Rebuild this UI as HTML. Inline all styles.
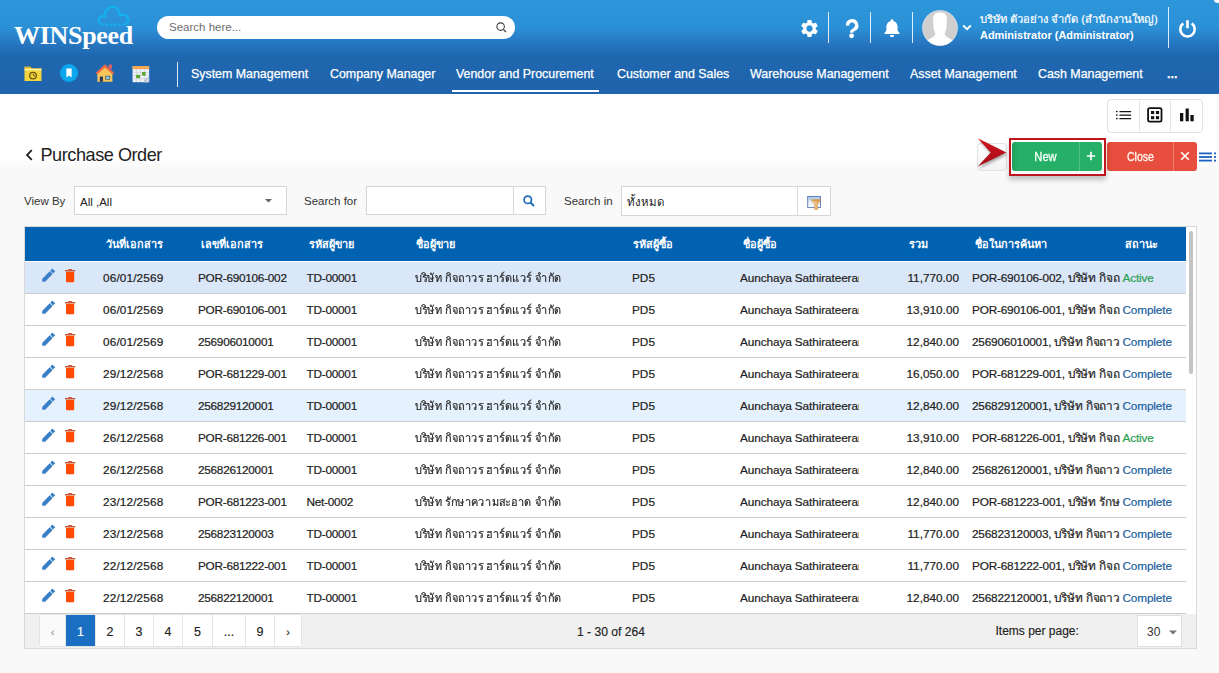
<!DOCTYPE html>
<html><head><meta charset="utf-8">
<style>
*{margin:0;padding:0;box-sizing:border-box}
html,body{width:1219px;height:673px;overflow:hidden}
body{font-family:"Liberation Sans",sans-serif;background:#f9f9f9;position:relative;color:#222}
.abs{position:absolute}
#hdr{position:absolute;left:0;top:0;width:1219px;height:94px;background:linear-gradient(to bottom,#2d96da 0px,#2b91d7 27px,#2676c0 44px,#1f67af 55px,#1f64ac 94px)}
#logo{position:absolute;left:14px;top:21px;font-family:"Liberation Serif",serif;font-weight:bold;font-size:26px;color:#fff;letter-spacing:-0.3px;line-height:30px;white-space:nowrap}
#search{position:absolute;left:157px;top:16px;width:358px;height:23px;background:#fff;border-radius:12px}
#search span{position:absolute;left:12px;top:4px;font-size:11.5px;color:#6d6d6d;line-height:14px}
.sep{position:absolute;width:1px;background:rgba(255,255,255,0.85)}
#uname{position:absolute;left:980px;top:11px;color:#fff;font-size:11.2px;-webkit-text-stroke:0.2px #fff;line-height:16px;white-space:nowrap}
#uname b{font-weight:bold;display:block;font-size:10.95px;margin-top:-0.5px;-webkit-text-stroke:0}
.nav{position:absolute;top:67px;color:#fff;font-size:12.4px;line-height:14px;white-space:nowrap;-webkit-text-stroke:0.25px #fff}
#page{position:absolute;left:0;top:94px;width:1219px;height:579px;background:linear-gradient(to bottom,#fefefe 0px,#fefefe 34px,#ffffff 35px,#ffffff 63px,#f9f9f9 74px,#f9f9f9 579px)}
#title{position:absolute;left:40.5px;top:144.5px;font-size:18.1px;letter-spacing:-0.45px;color:#222;line-height:20px}
.lbl{position:absolute;font-size:11.5px;color:#333;line-height:14px;white-space:nowrap}
.inp{position:absolute;background:#fff;border:1px solid #d6d6d6}
#tbl{position:absolute;left:24px;top:226px;width:1173px;height:423px;border:1px solid #d9d9d9;background:#fff;overflow:hidden}
#thead{position:absolute;left:0;top:0;width:1161px;height:34px;background:#0262b2}
.hd{position:absolute;top:10px;color:#fff;font-weight:bold;font-size:10.9px;line-height:14px;white-space:nowrap}
.row{position:absolute;left:0;width:1161px;height:32px;border-bottom:1px solid #cccccc;background:#fff}
.row.sel{background:#dae7f8}
.row.hov{background:#e5f1fc}
.row .t{position:absolute;top:9px;font-size:11.8px;line-height:14px;color:#222;white-space:nowrap;-webkit-text-stroke:0.2px currentColor}
.row .c{position:absolute}
.row .ic{display:block}
.clip{overflow:hidden}
.row .th{transform:scaleX(0.93);transform-origin:0 0;-webkit-text-stroke:0.15px #222}
.rt{text-align:right}
.act{color:#2aa051}
.cmp{color:#22609e}
#pager{position:absolute;left:0;top:387px;width:1171px;height:34px;background:#f0f0f0}
.pg{position:absolute;top:1px;height:31px;background:#fff;border-right:1px solid #e6e6e6;font-size:12.5px;color:#222;text-align:center;line-height:35px;-webkit-text-stroke:0.15px currentColor}
.pg.on{background:#1a6fc3;color:#fff}
#scroll{position:absolute;left:1164px;top:4px;width:4px;height:143px;background:#c4c4c4;border-radius:2px}
</style></head><body>
<div id="hdr">
  <div class="abs" style="left:1214px;top:-3px;width:8px;height:6px;border-radius:50%;background:#fff;filter:blur(0.6px)"></div>
  <svg class="abs" style="left:0;top:0" width="140" height="30" viewBox="0 0 140 30">
    <path d="M103 24.6 A4.3 4.3 0 1 1 105.75 16.99 A7.3 7.3 0 1 1 119.46 16.41 A5 5 0 1 1 123.3 24.6" fill="none" stroke="#12b2ee" stroke-width="2.1"/>
    <path d="M105.5 24.6 H121.5" stroke="#12b2ee" stroke-width="2.1" stroke-dasharray="2.6 1.6"/>
  </svg>
  <div id="logo">WINSpeed</div>
  <div id="search"><span>Search here...</span>
    <svg class="abs" style="left:338px;top:5px" width="13" height="13" viewBox="0 0 13 13"><circle cx="5.6" cy="5.6" r="3.75" fill="none" stroke="#3a3a3a" stroke-width="1.05"/><path d="M8.3 8.3 L11 11" stroke="#3a3a3a" stroke-width="1.2"/></svg>
  </div>
  <!-- gear -->
  <svg class="abs" style="left:798.5px;top:18px" width="21" height="21" viewBox="0 0 24 24"><path fill="#fff" d="M19.14 12.94c.04-.3.06-.61.06-.94 0-.32-.02-.64-.07-.94l2.03-1.58a.49.49 0 0 0 .12-.61l-1.92-3.32a.488.488 0 0 0-.59-.22l-2.39.96c-.5-.38-1.03-.7-1.62-.94l-.36-2.54a.484.484 0 0 0-.48-.41h-3.84c-.24 0-.43.17-.47.41l-.36 2.54c-.59.24-1.13.57-1.62.94l-2.39-.96c-.22-.08-.47 0-.59.22L2.74 8.87c-.12.21-.08.47.12.61l2.03 1.58c-.05.3-.09.63-.09.94s.02.64.07.94l-2.03 1.58a.49.49 0 0 0-.12.61l1.92 3.32c.12.22.37.29.59.22l2.39-.96c.5.38 1.03.7 1.62.94l.36 2.54c.05.24.24.41.48.41h3.84c.24 0 .44-.17.47-.41l.36-2.54c.59-.24 1.13-.56 1.62-.94l2.39.96c.22.08.47 0 .59-.22l1.92-3.32c.12-.22.07-.47-.12-.61l-2.01-1.58zM12 15.6c-1.98 0-3.6-1.62-3.6-3.6s1.62-3.6 3.6-3.6 3.6 1.62 3.6 3.6-1.62 3.6-3.6 3.6z"/></svg>
  <div class="sep" style="left:828px;top:12px;height:31px"></div>
  <svg class="abs" style="left:840px;top:15.8px" width="25" height="25" viewBox="840 15 25 25"><path d="M847.5 24.6 A4.6 4.6 0 1 1 854.4 28.4 Q851.7 29.8 851.7 31.2 V31.8" fill="none" stroke="#fff" stroke-width="3.3"/><circle cx="851.6" cy="34.8" r="2.4" fill="#fff"/></svg>
  <div class="sep" style="left:870px;top:12px;height:31px"></div>
  <svg class="abs" style="left:883px;top:18px" width="18" height="20" viewBox="0 0 18 20"><path fill="#fff" d="M9 1.2c.8 0 1.3.6 1.3 1.2v.5c2.6.6 4.3 2.9 4.3 5.7v3.8l1.9 2.6v1H1.5v-1l1.9-2.6V8.6c0-2.8 1.7-5.1 4.3-5.7v-.5c0-.6.5-1.2 1.3-1.2z"/><path fill="#fff" d="M6.8 17h4.4a2.2 2.2 0 0 1-4.4 0z"/></svg>
  <div class="sep" style="left:912px;top:12px;height:31px"></div>
  <svg class="abs" style="left:922px;top:10px" width="36" height="36" viewBox="0 0 36 36"><defs><clipPath id="cc"><circle cx="18" cy="18" r="17.6"/></clipPath></defs><circle cx="18" cy="18" r="17.8" fill="#e3e8ee"/><circle cx="18" cy="18" r="17.2" fill="#cfcfcf"/><g clip-path="url(#cc)" fill="#fff"><path d="M18 2.6 C22.6 2.6 24.9 4.6 24.9 9 L24.7 16 C24.5 19 23.6 21.2 22.6 23.4 C22.9 25.6 24.6 27 27.6 28.4 C31 30 33 32.5 34 37 H2 C3 32.5 5 30 8.4 28.4 C11.4 27 13.1 25.6 13.4 23.4 C12.4 21.2 11.5 19 11.3 16 L11.1 9 C11.1 4.6 13.4 2.6 18 2.6 Z"/></g></svg>
  <svg class="abs" style="left:962px;top:24px" width="10" height="7" viewBox="0 0 10 7"><path d="M1.2 1.5 L5 5.2 L8.8 1.5" fill="none" stroke="#fff" stroke-width="1.8"/></svg>
  <div id="uname">บริษัท ตัวอย่าง จำกัด (สำนักงานใหญ่)<b>Administrator (Administrator)</b></div>
  <div class="sep" style="left:1168px;top:7px;height:41px"></div>
  <svg class="abs" style="left:1178px;top:18.5px" width="19" height="19" viewBox="0 0 19 19"><path d="M5.3 4.4 A7.2 7.2 0 1 0 13.7 4.4" fill="none" stroke="#fff" stroke-width="2.6"/><path d="M9.5 1.2 V9.2" stroke="#fff" stroke-width="2.6"/></svg>

  <!-- nav icons -->
  <svg class="abs" style="left:24px;top:65.5px" width="18" height="16" viewBox="0 0 18 16"><path d="M0.5 0.8 H6.5 L7.6 2.2 H17.5 V15 H0.5 Z" fill="#f3d43c"/><rect x="0.5" y="0.8" width="6" height="1.2" fill="#d9b52a"/><rect x="0.5" y="3" width="17" height="1.3" fill="#fdf0a8"/><circle cx="9" cy="9.6" r="3.3" fill="none" stroke="#6a5510" stroke-width="1.3"/><path d="M9 7.9 L10.5 10.5" fill="none" stroke="#6a5510" stroke-width="1.1"/></svg>
  <svg class="abs" style="left:60px;top:64px" width="18" height="18" viewBox="0 0 18 18"><circle cx="9" cy="9" r="9" fill="#0ba6ee"/><path d="M6.4 4.5 H11.6 V13.6 L9 11.4 L6.4 13.6 Z" fill="#fff"/></svg>
  <svg class="abs" style="left:90px;top:60px" width="64" height="26" viewBox="90 60 64 26">
<rect x="108.8" y="64.6" width="3.2" height="4" fill="#e0606a"/>
<path d="M97.4 72 L105 65.6 L112.4 72 V81.8 H97.4 Z" fill="#f7c65a"/>
<path d="M95.6 73 L105 64.3 L114.3 73 L112.6 74.4 L105 67.4 L97.3 74.4 Z" fill="#ec6a45"/>
<path d="M99.8 81.8 V77 Q101.4 75.4 103 77 V81.8 Z" fill="#2c3d52"/>
<rect x="105.2" y="75.8" width="5" height="3.8" fill="#3d4f66"/><rect x="105.9" y="76.5" width="3.6" height="2.4" fill="#8fcaf0"/>
<rect x="132.6" y="66" width="16.5" height="16.2" fill="#eef3f8"/>
<rect x="132.6" y="66" width="16.5" height="3.2" fill="#f4a650"/>
<path d="M132.6 72.3 H149.1 M132.6 75.5 H149.1 M132.6 78.8 H149.1 M136.4 69.2 V82.2 M140.5 69.2 V82.2 M144.6 69.2 V82.2" stroke="#c5cfd9" stroke-width="0.7"/>
<rect x="136.1" y="74.8" width="3.9" height="3.3" fill="#5da52c"/><rect x="142" y="72" width="3.7" height="3.5" fill="#5da52c"/>
<path d="M143 82.2 L149.1 76.5 V82.2 Z" fill="#cfd6dd"/><path d="M143.5 81.8 L148.8 77" stroke="#9aa5b0" stroke-width="0.7"/>
</svg>
<div class="sep" style="left:177px;top:62px;height:25px"></div>
  <div class="nav" style="left:191px">System Management</div>
  <div class="nav" style="left:330px">Company Manager</div>
  <div class="nav" style="left:456px">Vendor and Procurement</div>
  <div class="abs" style="left:452px;top:90px;width:147px;height:2px;background:#fff"></div>
  <div class="nav" style="left:617px">Customer and Sales</div>
  <div class="nav" style="left:750px">Warehouse Management</div>
  <div class="nav" style="left:910px">Asset Management</div>
  <div class="nav" style="left:1038px">Cash Management</div>
  <div class="nav" style="left:1167px;font-weight:bold">...</div>
</div>

<div id="page"></div>

<!-- view toggle -->
<div class="abs" style="left:1107px;top:99px;width:96px;height:34px;background:#fff;border:1px solid #e1e1e1;border-radius:4px"></div>
<div class="abs" style="left:1139px;top:100px;width:1px;height:32px;background:#e4e4e4"></div>
<div class="abs" style="left:1170px;top:100px;width:1px;height:32px;background:#e4e4e4"></div>
<svg class="abs" style="left:1105px;top:97px" width="100" height="38" viewBox="1105 97 100 38">
<g fill="#111">
<rect x="1116" y="110.9" width="1.6" height="1.3"/><rect x="1116" y="114.4" width="1.6" height="1.3"/><rect x="1116" y="117.9" width="1.6" height="1.3"/>
<rect x="1119.4" y="110.9" width="11.8" height="1.4" rx="0.5"/><rect x="1119.4" y="114.4" width="11.8" height="1.4" rx="0.5"/><rect x="1119.4" y="117.9" width="11.8" height="1.4" rx="0.5"/>
<rect x="1151" y="111" width="3.2" height="3.1"/><rect x="1155.9" y="111" width="3.2" height="3.1"/><rect x="1151" y="116.1" width="3.2" height="3.1"/><rect x="1155.9" y="116.1" width="3.2" height="3.1"/>
<rect x="1180" y="113" width="3.3" height="8.3"/><rect x="1185.6" y="108.5" width="3.2" height="12.8"/><rect x="1190.4" y="115" width="3.3" height="6.3"/>
</g>
<rect x="1148.1" y="108.2" width="13.4" height="13.4" rx="1.6" fill="none" stroke="#111" stroke-width="1.8"/>
</svg>

<!-- title -->
<svg class="abs" style="left:25px;top:149px" width="9" height="12" viewBox="0 0 9 12"><path d="M6.8 1.2 L2 6 L6.8 10.8" fill="none" stroke="#222" stroke-width="1.8"/></svg>
<div id="title">Purchase Order</div>

<!-- arrow pointer -->
<div class="abs" style="left:977px;top:142.5px;width:30px;height:28px;background:linear-gradient(#ffffff,#f3f3f3);border:1px solid #e2e2e2;border-radius:4px"></div>
<svg class="abs" style="left:970px;top:130px" width="45" height="45" viewBox="970 130 45 45"><defs><linearGradient id="ar" x1="0" y1="0" x2="0" y2="1"><stop offset="0" stop-color="#d0141f"/><stop offset="1" stop-color="#a50d17"/></linearGradient></defs><path d="M977.7 138.2 L1006.3 152.4 L977.7 166.6 L990.7 152.4 Z" fill="url(#ar)" style="filter:drop-shadow(1px 2px 1.5px rgba(0,0,0,0.35))"/></svg>
<!-- red outline -->
<div class="abs" style="left:1008.5px;top:137.5px;width:97px;height:38px;border:2px solid #c0161e;box-shadow:0 4px 5px rgba(0,0,0,0.22)"></div>
<div class="abs" style="left:1012px;top:142px;width:90px;height:29px;background:linear-gradient(to right,#1f9f5c,#26b067 6px,#26b067);border-radius:3px"></div>
<div class="abs" style="left:1079px;top:142px;width:1px;height:29px;background:#4cc384"></div>
<div class="abs" style="left:1012px;top:150px;width:67px;text-align:center;color:#f2fff6;font-size:12px;line-height:14px;-webkit-text-stroke:0.35px #f2fff6;transform:scaleX(0.93)">New</div>
<svg class="abs" style="left:1085px;top:150px" width="12" height="12" viewBox="0 0 12 12"><path d="M6 1.8 V10.2 M1.8 6 H10.2" stroke="#fff" stroke-width="1.7"/></svg>
<div class="abs" style="left:1107px;top:142px;width:90px;height:29px;background:linear-gradient(to right,#d94434,#e84e3e 6px,#e84e3e);border-radius:3px"></div>
<div class="abs" style="left:1173px;top:142px;width:1px;height:29px;background:#f08073"></div>
<div class="abs" style="left:1108px;top:150px;width:65px;text-align:center;color:#fff3ea;font-size:12.3px;line-height:14px;-webkit-text-stroke:0.35px #fff3ea;transform:scaleX(0.86)">Close</div>
<svg class="abs" style="left:1180px;top:151px" width="10" height="10" viewBox="0 0 10 10"><path d="M1.2 1.2 L8.8 8.8 M8.8 1.2 L1.2 8.8" stroke="#fff" stroke-width="1.6"/></svg>
<svg class="abs" style="left:1199px;top:152px" width="20" height="10" viewBox="0 0 20 10"><rect x="0" y="0.5" width="13" height="1.8" fill="#1b63bf"/><rect x="0" y="4.1" width="13" height="1.8" fill="#1b63bf"/><rect x="0" y="7.7" width="13" height="1.8" fill="#1b63bf"/><rect x="15" y="0.5" width="2" height="1.8" fill="#1b63bf"/><rect x="15" y="4.1" width="2" height="1.8" fill="#1b63bf"/><rect x="15" y="7.7" width="2" height="1.8" fill="#1b63bf"/></svg>

<!-- filters -->
<div class="lbl" style="left:24px;top:194px">View By</div>
<div class="inp" style="left:74px;top:186px;width:213px;height:29px"></div>
<div class="lbl" style="left:80px;top:195px;color:#222">All ,All</div>
<svg class="abs" style="left:265px;top:199px" width="7" height="4" viewBox="0 0 7 4"><path d="M0 0 H7 L3.5 3.5Z" fill="#666"/></svg>
<div class="lbl" style="left:304px;top:194px">Search for</div>
<div class="inp" style="left:366px;top:186px;width:180px;height:29px"></div>
<div class="abs" style="left:513px;top:187px;width:1px;height:27px;background:#dadada"></div>
<svg class="abs" style="left:523px;top:195px" width="12" height="12" viewBox="0 0 12 12"><circle cx="4.8" cy="4.8" r="3.7" fill="none" stroke="#1f68b5" stroke-width="1.7"/><path d="M7.6 7.6 L11 11" stroke="#1f68b5" stroke-width="2"/></svg>
<div class="lbl" style="left:564px;top:194px">Search in</div>
<div class="inp" style="left:621px;top:186px;width:210px;height:30px"></div>
<div class="abs" style="left:797px;top:187px;width:1px;height:28px;background:#dadada"></div>
<div class="lbl" style="left:627px;top:195px;color:#222">ทั้งหมด</div>
<svg class="abs" style="left:800px;top:190px" width="30" height="25" viewBox="800 190 30 25"><defs><linearGradient id="wg" x1="0" y1="0" x2="0" y2="1"><stop offset="0" stop-color="#9cc0ee"/><stop offset="0.5" stop-color="#e6f0fb"/><stop offset="1" stop-color="#ffffff"/></linearGradient><linearGradient id="fg" x1="0" y1="0" x2="1" y2="0"><stop offset="0" stop-color="#fbe1b0"/><stop offset="1" stop-color="#dd9a4c"/></linearGradient></defs><rect x="807.7" y="196.4" width="12.8" height="11.2" fill="url(#wg)" stroke="#5b78ad" stroke-width="0.9"/><path d="M810.6 199.6 H820.8 L817.6 204.2 V209.2 Q816.1 210.2 814.6 209.2 V204.2 Z" fill="url(#fg)" stroke="#c98a3f" stroke-width="0.5"/><ellipse cx="815.7" cy="200.4" rx="3.6" ry="0.9" fill="#c98a3f" opacity="0.6"/></svg>

<!-- table -->
<div id="tbl">
  <div id="thead">
    <span class="hd" style="left:81px">วันที่เอกสาร</span>
    <span class="hd" style="left:176px">เลขที่เอกสาร</span>
    <span class="hd" style="left:284px">รหัสผู้ขาย</span>
    <span class="hd" style="left:391px">ชื่อผู้ขาย</span>
    <span class="hd" style="left:608px">รหัสผู้ซื้อ</span>
    <span class="hd" style="left:718px">ชื่อผู้ซื้อ</span>
    <span class="hd" style="left:884px">รวม</span>
    <span class="hd" style="left:950px">ชื่อในการค้นหา</span>
    <span class="hd" style="left:1100px">สถานะ</span>
  </div>
<div class="row sel" style="top:35px">
<span class="c" style="left:17px;top:7px"><svg class="ic pen" width="14" height="14" viewBox="0 0 14 14" style="overflow:visible"><path d="M0.2 12.8 L0.31 9.83 L7.77 2.2 L10.63 5.0 L3.17 12.63 Z" fill="#3b7fc6"/><path d="M8.26 1.7 L10.36 -0.44 L13.2 2.36 L11.12 4.5 Z" fill="#3b7fc6"/></svg></span><span class="c" style="left:40px;top:7px"><svg class="ic tr" width="11" height="14" viewBox="0 0 11 14" style="overflow:visible"><rect x="3.3" y="-0.1" width="3.6" height="1.3" rx="0.4" fill="#c9583a"/><rect x="0" y="0.9" width="10.2" height="1.5" rx="0.3" fill="#c9502c"/><path d="M1 3 H9.2 V12.2 Q9.2 13.2 8.2 13.2 H2 Q1 13.2 1 12.2 Z" fill="#ff4a00"/></svg></span>
<span class="t" style="left:78px;letter-spacing:0.13px">06/01/2569</span>
<span class="t" style="left:173px;letter-spacing:-0.27px">POR-690106-002</span>
<span class="t" style="left:281.5px;letter-spacing:-0.25px">TD-00001</span>
<span class="t th" style="left:390px">บริษัท กิจถาวร ฮาร์ดแวร์ จำกัด</span>
<span class="t" style="left:607px">PD5</span>
<span class="t clip" style="left:715px;width:119px;letter-spacing:-0.1px">Aunchaya Sathirateeran</span>
<span class="t rt" style="left:834px;width:100px">11,770.00</span>
<span class="t clip" style="left:947px;width:148px;letter-spacing:-0.2px">POR-690106-002, บริษัท กิจถาวร</span>
<span class="t" style="left:1097.5px;letter-spacing:-0.15px"><span class="act">Active</span></span>
</div>
<div class="row " style="top:67px">
<span class="c" style="left:17px;top:7px"><svg class="ic pen" width="14" height="14" viewBox="0 0 14 14" style="overflow:visible"><path d="M0.2 12.8 L0.31 9.83 L7.77 2.2 L10.63 5.0 L3.17 12.63 Z" fill="#3b7fc6"/><path d="M8.26 1.7 L10.36 -0.44 L13.2 2.36 L11.12 4.5 Z" fill="#3b7fc6"/></svg></span><span class="c" style="left:40px;top:7px"><svg class="ic tr" width="11" height="14" viewBox="0 0 11 14" style="overflow:visible"><rect x="3.3" y="-0.1" width="3.6" height="1.3" rx="0.4" fill="#c9583a"/><rect x="0" y="0.9" width="10.2" height="1.5" rx="0.3" fill="#c9502c"/><path d="M1 3 H9.2 V12.2 Q9.2 13.2 8.2 13.2 H2 Q1 13.2 1 12.2 Z" fill="#ff4a00"/></svg></span>
<span class="t" style="left:78px;letter-spacing:0.13px">06/01/2569</span>
<span class="t" style="left:173px;letter-spacing:-0.27px">POR-690106-001</span>
<span class="t" style="left:281.5px;letter-spacing:-0.25px">TD-00001</span>
<span class="t th" style="left:390px">บริษัท กิจถาวร ฮาร์ดแวร์ จำกัด</span>
<span class="t" style="left:607px">PD5</span>
<span class="t clip" style="left:715px;width:119px;letter-spacing:-0.1px">Aunchaya Sathirateeran</span>
<span class="t rt" style="left:834px;width:100px">13,910.00</span>
<span class="t clip" style="left:947px;width:148px;letter-spacing:-0.2px">POR-690106-001, บริษัท กิจถาวร</span>
<span class="t" style="left:1097.5px;letter-spacing:-0.15px"><span class="cmp">Complete</span></span>
</div>
<div class="row " style="top:99px">
<span class="c" style="left:17px;top:7px"><svg class="ic pen" width="14" height="14" viewBox="0 0 14 14" style="overflow:visible"><path d="M0.2 12.8 L0.31 9.83 L7.77 2.2 L10.63 5.0 L3.17 12.63 Z" fill="#3b7fc6"/><path d="M8.26 1.7 L10.36 -0.44 L13.2 2.36 L11.12 4.5 Z" fill="#3b7fc6"/></svg></span><span class="c" style="left:40px;top:7px"><svg class="ic tr" width="11" height="14" viewBox="0 0 11 14" style="overflow:visible"><rect x="3.3" y="-0.1" width="3.6" height="1.3" rx="0.4" fill="#c9583a"/><rect x="0" y="0.9" width="10.2" height="1.5" rx="0.3" fill="#c9502c"/><path d="M1 3 H9.2 V12.2 Q9.2 13.2 8.2 13.2 H2 Q1 13.2 1 12.2 Z" fill="#ff4a00"/></svg></span>
<span class="t" style="left:78px;letter-spacing:0.13px">06/01/2569</span>
<span class="t" style="left:173px;letter-spacing:-0.27px">256906010001</span>
<span class="t" style="left:281.5px;letter-spacing:-0.25px">TD-00001</span>
<span class="t th" style="left:390px">บริษัท กิจถาวร ฮาร์ดแวร์ จำกัด</span>
<span class="t" style="left:607px">PD5</span>
<span class="t clip" style="left:715px;width:119px;letter-spacing:-0.1px">Aunchaya Sathirateeran</span>
<span class="t rt" style="left:834px;width:100px">12,840.00</span>
<span class="t clip" style="left:947px;width:148px;letter-spacing:-0.2px">256906010001, บริษัท กิจถาวร</span>
<span class="t" style="left:1097.5px;letter-spacing:-0.15px"><span class="cmp">Complete</span></span>
</div>
<div class="row " style="top:131px">
<span class="c" style="left:17px;top:7px"><svg class="ic pen" width="14" height="14" viewBox="0 0 14 14" style="overflow:visible"><path d="M0.2 12.8 L0.31 9.83 L7.77 2.2 L10.63 5.0 L3.17 12.63 Z" fill="#3b7fc6"/><path d="M8.26 1.7 L10.36 -0.44 L13.2 2.36 L11.12 4.5 Z" fill="#3b7fc6"/></svg></span><span class="c" style="left:40px;top:7px"><svg class="ic tr" width="11" height="14" viewBox="0 0 11 14" style="overflow:visible"><rect x="3.3" y="-0.1" width="3.6" height="1.3" rx="0.4" fill="#c9583a"/><rect x="0" y="0.9" width="10.2" height="1.5" rx="0.3" fill="#c9502c"/><path d="M1 3 H9.2 V12.2 Q9.2 13.2 8.2 13.2 H2 Q1 13.2 1 12.2 Z" fill="#ff4a00"/></svg></span>
<span class="t" style="left:78px;letter-spacing:0.13px">29/12/2568</span>
<span class="t" style="left:173px;letter-spacing:-0.27px">POR-681229-001</span>
<span class="t" style="left:281.5px;letter-spacing:-0.25px">TD-00001</span>
<span class="t th" style="left:390px">บริษัท กิจถาวร ฮาร์ดแวร์ จำกัด</span>
<span class="t" style="left:607px">PD5</span>
<span class="t clip" style="left:715px;width:119px;letter-spacing:-0.1px">Aunchaya Sathirateeran</span>
<span class="t rt" style="left:834px;width:100px">16,050.00</span>
<span class="t clip" style="left:947px;width:148px;letter-spacing:-0.2px">POR-681229-001, บริษัท กิจถาวร</span>
<span class="t" style="left:1097.5px;letter-spacing:-0.15px"><span class="cmp">Complete</span></span>
</div>
<div class="row hov" style="top:163px">
<span class="c" style="left:17px;top:7px"><svg class="ic pen" width="14" height="14" viewBox="0 0 14 14" style="overflow:visible"><path d="M0.2 12.8 L0.31 9.83 L7.77 2.2 L10.63 5.0 L3.17 12.63 Z" fill="#3b7fc6"/><path d="M8.26 1.7 L10.36 -0.44 L13.2 2.36 L11.12 4.5 Z" fill="#3b7fc6"/></svg></span><span class="c" style="left:40px;top:7px"><svg class="ic tr" width="11" height="14" viewBox="0 0 11 14" style="overflow:visible"><rect x="3.3" y="-0.1" width="3.6" height="1.3" rx="0.4" fill="#c9583a"/><rect x="0" y="0.9" width="10.2" height="1.5" rx="0.3" fill="#c9502c"/><path d="M1 3 H9.2 V12.2 Q9.2 13.2 8.2 13.2 H2 Q1 13.2 1 12.2 Z" fill="#ff4a00"/></svg></span>
<span class="t" style="left:78px;letter-spacing:0.13px">29/12/2568</span>
<span class="t" style="left:173px;letter-spacing:-0.27px">256829120001</span>
<span class="t" style="left:281.5px;letter-spacing:-0.25px">TD-00001</span>
<span class="t th" style="left:390px">บริษัท กิจถาวร ฮาร์ดแวร์ จำกัด</span>
<span class="t" style="left:607px">PD5</span>
<span class="t clip" style="left:715px;width:119px;letter-spacing:-0.1px">Aunchaya Sathirateeran</span>
<span class="t rt" style="left:834px;width:100px">12,840.00</span>
<span class="t clip" style="left:947px;width:148px;letter-spacing:-0.2px">256829120001, บริษัท กิจถาวร</span>
<span class="t" style="left:1097.5px;letter-spacing:-0.15px"><span class="cmp">Complete</span></span>
</div>
<div class="row " style="top:195px">
<span class="c" style="left:17px;top:7px"><svg class="ic pen" width="14" height="14" viewBox="0 0 14 14" style="overflow:visible"><path d="M0.2 12.8 L0.31 9.83 L7.77 2.2 L10.63 5.0 L3.17 12.63 Z" fill="#3b7fc6"/><path d="M8.26 1.7 L10.36 -0.44 L13.2 2.36 L11.12 4.5 Z" fill="#3b7fc6"/></svg></span><span class="c" style="left:40px;top:7px"><svg class="ic tr" width="11" height="14" viewBox="0 0 11 14" style="overflow:visible"><rect x="3.3" y="-0.1" width="3.6" height="1.3" rx="0.4" fill="#c9583a"/><rect x="0" y="0.9" width="10.2" height="1.5" rx="0.3" fill="#c9502c"/><path d="M1 3 H9.2 V12.2 Q9.2 13.2 8.2 13.2 H2 Q1 13.2 1 12.2 Z" fill="#ff4a00"/></svg></span>
<span class="t" style="left:78px;letter-spacing:0.13px">26/12/2568</span>
<span class="t" style="left:173px;letter-spacing:-0.27px">POR-681226-001</span>
<span class="t" style="left:281.5px;letter-spacing:-0.25px">TD-00001</span>
<span class="t th" style="left:390px">บริษัท กิจถาวร ฮาร์ดแวร์ จำกัด</span>
<span class="t" style="left:607px">PD5</span>
<span class="t clip" style="left:715px;width:119px;letter-spacing:-0.1px">Aunchaya Sathirateeran</span>
<span class="t rt" style="left:834px;width:100px">13,910.00</span>
<span class="t clip" style="left:947px;width:148px;letter-spacing:-0.2px">POR-681226-001, บริษัท กิจถาวร</span>
<span class="t" style="left:1097.5px;letter-spacing:-0.15px"><span class="act">Active</span></span>
</div>
<div class="row " style="top:227px">
<span class="c" style="left:17px;top:7px"><svg class="ic pen" width="14" height="14" viewBox="0 0 14 14" style="overflow:visible"><path d="M0.2 12.8 L0.31 9.83 L7.77 2.2 L10.63 5.0 L3.17 12.63 Z" fill="#3b7fc6"/><path d="M8.26 1.7 L10.36 -0.44 L13.2 2.36 L11.12 4.5 Z" fill="#3b7fc6"/></svg></span><span class="c" style="left:40px;top:7px"><svg class="ic tr" width="11" height="14" viewBox="0 0 11 14" style="overflow:visible"><rect x="3.3" y="-0.1" width="3.6" height="1.3" rx="0.4" fill="#c9583a"/><rect x="0" y="0.9" width="10.2" height="1.5" rx="0.3" fill="#c9502c"/><path d="M1 3 H9.2 V12.2 Q9.2 13.2 8.2 13.2 H2 Q1 13.2 1 12.2 Z" fill="#ff4a00"/></svg></span>
<span class="t" style="left:78px;letter-spacing:0.13px">26/12/2568</span>
<span class="t" style="left:173px;letter-spacing:-0.27px">256826120001</span>
<span class="t" style="left:281.5px;letter-spacing:-0.25px">TD-00001</span>
<span class="t th" style="left:390px">บริษัท กิจถาวร ฮาร์ดแวร์ จำกัด</span>
<span class="t" style="left:607px">PD5</span>
<span class="t clip" style="left:715px;width:119px;letter-spacing:-0.1px">Aunchaya Sathirateeran</span>
<span class="t rt" style="left:834px;width:100px">12,840.00</span>
<span class="t clip" style="left:947px;width:148px;letter-spacing:-0.2px">256826120001, บริษัท กิจถาวร</span>
<span class="t" style="left:1097.5px;letter-spacing:-0.15px"><span class="cmp">Complete</span></span>
</div>
<div class="row " style="top:259px">
<span class="c" style="left:17px;top:7px"><svg class="ic pen" width="14" height="14" viewBox="0 0 14 14" style="overflow:visible"><path d="M0.2 12.8 L0.31 9.83 L7.77 2.2 L10.63 5.0 L3.17 12.63 Z" fill="#3b7fc6"/><path d="M8.26 1.7 L10.36 -0.44 L13.2 2.36 L11.12 4.5 Z" fill="#3b7fc6"/></svg></span><span class="c" style="left:40px;top:7px"><svg class="ic tr" width="11" height="14" viewBox="0 0 11 14" style="overflow:visible"><rect x="3.3" y="-0.1" width="3.6" height="1.3" rx="0.4" fill="#c9583a"/><rect x="0" y="0.9" width="10.2" height="1.5" rx="0.3" fill="#c9502c"/><path d="M1 3 H9.2 V12.2 Q9.2 13.2 8.2 13.2 H2 Q1 13.2 1 12.2 Z" fill="#ff4a00"/></svg></span>
<span class="t" style="left:78px;letter-spacing:0.13px">23/12/2568</span>
<span class="t" style="left:173px;letter-spacing:-0.27px">POR-681223-001</span>
<span class="t" style="left:281.5px;letter-spacing:-0.25px">Net-0002</span>
<span class="t th" style="left:390px">บริษัท รักษาความสะอาด จำกัด</span>
<span class="t" style="left:607px">PD5</span>
<span class="t clip" style="left:715px;width:119px;letter-spacing:-0.1px">Aunchaya Sathirateeran</span>
<span class="t rt" style="left:834px;width:100px">12,840.00</span>
<span class="t clip" style="left:947px;width:148px;letter-spacing:-0.2px">POR-681223-001, บริษัท รักษาความ</span>
<span class="t" style="left:1097.5px;letter-spacing:-0.15px"><span class="cmp">Complete</span></span>
</div>
<div class="row " style="top:291px">
<span class="c" style="left:17px;top:7px"><svg class="ic pen" width="14" height="14" viewBox="0 0 14 14" style="overflow:visible"><path d="M0.2 12.8 L0.31 9.83 L7.77 2.2 L10.63 5.0 L3.17 12.63 Z" fill="#3b7fc6"/><path d="M8.26 1.7 L10.36 -0.44 L13.2 2.36 L11.12 4.5 Z" fill="#3b7fc6"/></svg></span><span class="c" style="left:40px;top:7px"><svg class="ic tr" width="11" height="14" viewBox="0 0 11 14" style="overflow:visible"><rect x="3.3" y="-0.1" width="3.6" height="1.3" rx="0.4" fill="#c9583a"/><rect x="0" y="0.9" width="10.2" height="1.5" rx="0.3" fill="#c9502c"/><path d="M1 3 H9.2 V12.2 Q9.2 13.2 8.2 13.2 H2 Q1 13.2 1 12.2 Z" fill="#ff4a00"/></svg></span>
<span class="t" style="left:78px;letter-spacing:0.13px">23/12/2568</span>
<span class="t" style="left:173px;letter-spacing:-0.27px">256823120003</span>
<span class="t" style="left:281.5px;letter-spacing:-0.25px">TD-00001</span>
<span class="t th" style="left:390px">บริษัท กิจถาวร ฮาร์ดแวร์ จำกัด</span>
<span class="t" style="left:607px">PD5</span>
<span class="t clip" style="left:715px;width:119px;letter-spacing:-0.1px">Aunchaya Sathirateeran</span>
<span class="t rt" style="left:834px;width:100px">11,770.00</span>
<span class="t clip" style="left:947px;width:148px;letter-spacing:-0.2px">256823120003, บริษัท กิจถาวร</span>
<span class="t" style="left:1097.5px;letter-spacing:-0.15px"><span class="cmp">Complete</span></span>
</div>
<div class="row " style="top:323px">
<span class="c" style="left:17px;top:7px"><svg class="ic pen" width="14" height="14" viewBox="0 0 14 14" style="overflow:visible"><path d="M0.2 12.8 L0.31 9.83 L7.77 2.2 L10.63 5.0 L3.17 12.63 Z" fill="#3b7fc6"/><path d="M8.26 1.7 L10.36 -0.44 L13.2 2.36 L11.12 4.5 Z" fill="#3b7fc6"/></svg></span><span class="c" style="left:40px;top:7px"><svg class="ic tr" width="11" height="14" viewBox="0 0 11 14" style="overflow:visible"><rect x="3.3" y="-0.1" width="3.6" height="1.3" rx="0.4" fill="#c9583a"/><rect x="0" y="0.9" width="10.2" height="1.5" rx="0.3" fill="#c9502c"/><path d="M1 3 H9.2 V12.2 Q9.2 13.2 8.2 13.2 H2 Q1 13.2 1 12.2 Z" fill="#ff4a00"/></svg></span>
<span class="t" style="left:78px;letter-spacing:0.13px">22/12/2568</span>
<span class="t" style="left:173px;letter-spacing:-0.27px">POR-681222-001</span>
<span class="t" style="left:281.5px;letter-spacing:-0.25px">TD-00001</span>
<span class="t th" style="left:390px">บริษัท กิจถาวร ฮาร์ดแวร์ จำกัด</span>
<span class="t" style="left:607px">PD5</span>
<span class="t clip" style="left:715px;width:119px;letter-spacing:-0.1px">Aunchaya Sathirateeran</span>
<span class="t rt" style="left:834px;width:100px">11,770.00</span>
<span class="t clip" style="left:947px;width:148px;letter-spacing:-0.2px">POR-681222-001, บริษัท กิจถาวร</span>
<span class="t" style="left:1097.5px;letter-spacing:-0.15px"><span class="cmp">Complete</span></span>
</div>
<div class="row " style="top:355px">
<span class="c" style="left:17px;top:7px"><svg class="ic pen" width="14" height="14" viewBox="0 0 14 14" style="overflow:visible"><path d="M0.2 12.8 L0.31 9.83 L7.77 2.2 L10.63 5.0 L3.17 12.63 Z" fill="#3b7fc6"/><path d="M8.26 1.7 L10.36 -0.44 L13.2 2.36 L11.12 4.5 Z" fill="#3b7fc6"/></svg></span><span class="c" style="left:40px;top:7px"><svg class="ic tr" width="11" height="14" viewBox="0 0 11 14" style="overflow:visible"><rect x="3.3" y="-0.1" width="3.6" height="1.3" rx="0.4" fill="#c9583a"/><rect x="0" y="0.9" width="10.2" height="1.5" rx="0.3" fill="#c9502c"/><path d="M1 3 H9.2 V12.2 Q9.2 13.2 8.2 13.2 H2 Q1 13.2 1 12.2 Z" fill="#ff4a00"/></svg></span>
<span class="t" style="left:78px;letter-spacing:0.13px">22/12/2568</span>
<span class="t" style="left:173px;letter-spacing:-0.27px">256822120001</span>
<span class="t" style="left:281.5px;letter-spacing:-0.25px">TD-00001</span>
<span class="t th" style="left:390px">บริษัท กิจถาวร ฮาร์ดแวร์ จำกัด</span>
<span class="t" style="left:607px">PD5</span>
<span class="t clip" style="left:715px;width:119px;letter-spacing:-0.1px">Aunchaya Sathirateeran</span>
<span class="t rt" style="left:834px;width:100px">12,840.00</span>
<span class="t clip" style="left:947px;width:148px;letter-spacing:-0.2px">256822120001, บริษัท กิจถาวร</span>
<span class="t" style="left:1097.5px;letter-spacing:-0.15px"><span class="cmp">Complete</span></span>
</div>
  <div id="scroll"></div>
  <div id="pager">
    <div class="abs" style="left:14px;top:0px;width:263px;height:33px;border:1px solid #e3e3e3;border-radius:3px;background:#fff"></div>
    <div class="pg" style="left:15px;width:26px;color:#999;font-size:11px;background:#fafafa">&#8249;</div>
    <div class="pg on" style="left:41px;width:30px">1</div>
    <div class="pg" style="left:71px;width:29px">2</div>
    <div class="pg" style="left:100px;width:29px">3</div>
    <div class="pg" style="left:129px;width:29px">4</div>
    <div class="pg" style="left:158px;width:30px">5</div>
    <div class="pg" style="left:188px;width:33px">...</div>
    <div class="pg" style="left:221px;width:29px">9</div>
    <div class="pg" style="left:250px;width:26px;font-size:11px;border-right:0">&#8250;</div>
    <div class="abs" style="left:552px;top:11px;font-size:12.1px;color:#222;line-height:15px;-webkit-text-stroke:0.15px #222">1 - 30 of 264</div>
    <div class="abs" style="left:970.5px;top:10px;font-size:12px;color:#222;line-height:15px;-webkit-text-stroke:0.15px #222">Items per page:</div>
    <div class="abs" style="left:1112px;top:1px;width:45px;height:32px;background:#fff;border:1px solid #e0e0e0"></div>
    <div class="abs" style="left:1122px;top:11px;font-size:12px;color:#333;line-height:14px">30</div>
    <svg class="abs" style="left:1144px;top:16px" width="8" height="5" viewBox="0 0 8 5"><path d="M0 0.5 H8 L4 4.5Z" fill="#777"/></svg>
  </div>
</div>
</body></html>
